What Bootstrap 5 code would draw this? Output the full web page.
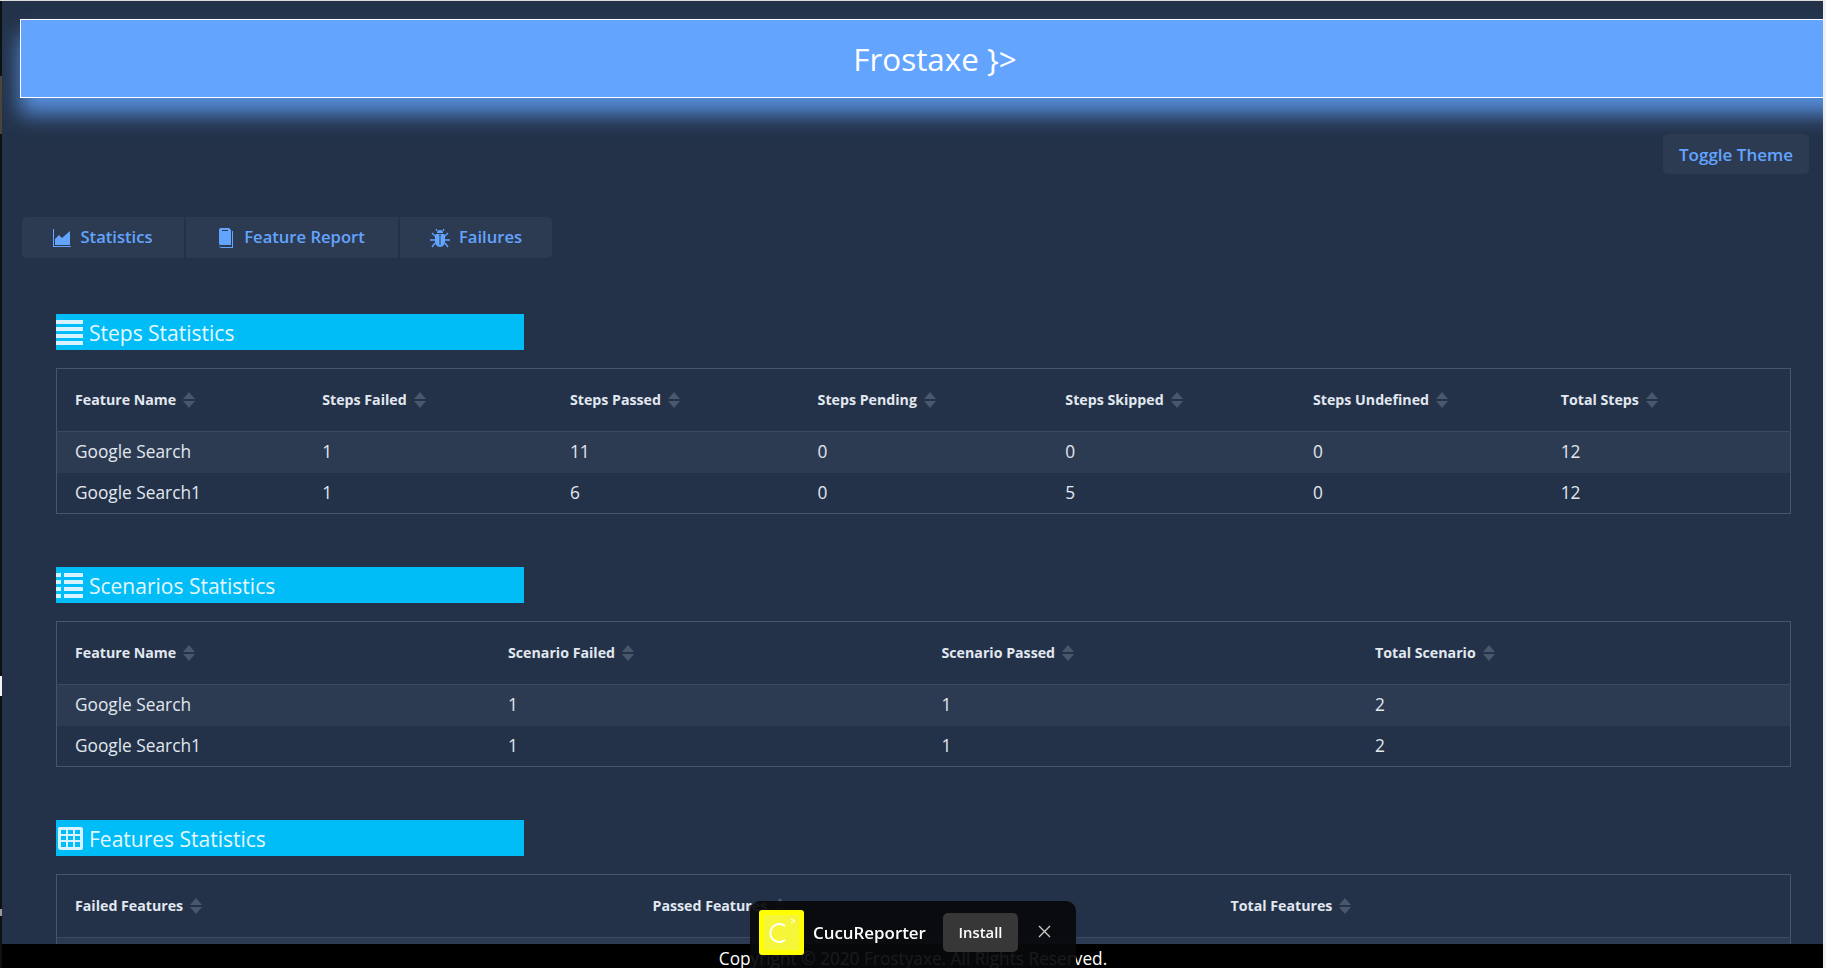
<!DOCTYPE html>
<html lang="en">
<head>
    <meta charset="UTF-8">
    <meta name="viewport" content="width=device-width, initial-scale=1.0">
    <title>Frostaxe</title>
    <link href="https://cdn.jsdelivr.net/npm/bootstrap@5.3.0/dist/css/bootstrap.min.css" rel="stylesheet">
    <script src="https://cdn.jsdelivr.net/npm/bootstrap@5.3.0/dist/js/bootstrap.bundle.min.js"></script>
    <style>
        html, body { height: 100%; overflow: hidden; }
        body {
            background: #233249;
            color: #e2e8f0;
            font-family: "Open Sans", "Noto Sans", sans-serif;
            border-top: 1px solid #ddd;
        }
        .edge-left {
            position: fixed;
            left: 0; top: 1px; bottom: 0;
            width: 2px;
            background: linear-gradient(#0c1114 0 75px, #4a4538 75px 133px, #0c1114 133px 675px, #f4f4f4 675px 695px, #0c1114 695px 908px, #9a9a9a 908px 915px, #0c1114 915px);
            z-index: 5;
        }
        .edge-right {
            position: fixed;
            right: 0; top: 0; bottom: 0;
            width: 3px;
            background: #eef0f4;
            z-index: 5;
        }
        .page-wrap { padding: 18px 0 0 20px; }
        .banner {
            height: 79px;
            margin-right: -24px;
            background: #63a4ff;
            border: 1px solid #fff;
            color: #fff;
            font-size: 31.4px;
            box-shadow: 0 16px 20px rgba(99,164,255,.8);
        }
        .theme-row { padding: 36px 17px 0 0; }
        .soft-btn {
            background: #2d3b52;
            color: #63a4ff;
            font-weight: 600;
            border-radius: 5px;
            border: 0;
        }
        .soft-btn:hover { background: #2d3b52; color: #63a4ff; }
        .theme-btn { width: 146px; height: 40px; font-size: 17px; padding: 1px 0 0; }
        .tabs-row { margin: 43px 0 0 2px; gap: 2px; }
        .tab-btn { height: 41px; font-size: 16.6px; padding: 0; border-radius: 0; gap: 9px; }
        .tab-btn svg { fill: #63a4ff; }
        .tab-a { width: 162px; border-radius: 5px 0 0 5px; }
        .tab-b { width: 212px; gap: 11px; }
        .tab-c { width: 152px; border-radius: 0 5px 5px 0; }
        .stats-wrap { padding: 56px 35px 0 36px; }
        .sec-head {
            width: 468px;
            height: 36px;
            padding-top: 3px;
            background: #00bdf7;
            color: #e4f7ff;
            font-size: 21px;
            font-weight: 400;
            gap: 5px;
            margin: 0 0 18px;
        }
        .sec-head svg { fill: #d8f3ff; flex: none; margin-top: -3px; }
        .stat-table {
            table-layout: fixed;
            width: 100%;
            margin-bottom: 53px;
            border: 1px solid #46556b;
            color: #e2e8f0;
            --bs-table-bg: transparent;
            --bs-table-color: #e2e8f0;
        }
        .stat-table th {
            height: 63px;
            padding: 0 0 0 18px;
            font-size: 14.2px;
            font-weight: 700;
            vertical-align: middle;
            border-bottom: 1px solid #3a4a60;
        }
        .stat-table td {
            height: 41px;
            padding: 0 0 0 18px;
            font-size: 17.3px;
            vertical-align: middle;
            border: 0;
        }
        .stat-table tbody tr:first-child td { background: #2d3b52; }
        .sort-mark { display: inline-block; vertical-align: -3px; margin-left: 7px; fill: #4a576a; }
        .foot-bar {
            position: fixed;
            left: 0; right: 0; bottom: 0;
            height: 24px;
            background: #000;
            color: #fff;
            font-size: 17.25px;
            line-height: 29px;
            text-align: center;
            overflow: hidden;
        }
        .install-bar {
            position: fixed;
            left: 750px;
            top: 901px;
            width: 326px;
            height: 67px;
            background: rgba(8,9,11,.93);
            border-radius: 10px 10px 0 0;
            padding: 9px 0 0 9px;
            color: #fff;
        }
        .app-logo {
            width: 45px; height: 45px;
            background: #ffff00;
            border-radius: 3px;
            flex: none;
        }
        .app-name { height: 45px; font-size: 16.9px; font-weight: 600; margin-left: 9px; width: 130px; }
        .install-btn {
            width: 75px; height: 39px;
            background: #373737;
            color: #fff;
            font-size: 14.8px;
            font-weight: 600;
            border-radius: 5px;
            padding: 0;
            border: 0;
            margin-top: 3px;
        }
        .close-x { margin: 15px 0 0 20px; stroke: #c8c8c8; }
    </style>
</head>
<body>
    <div class="edge-left"></div>
    <div class="edge-right"></div>

    <div class="page-wrap">
        <header class="banner d-flex align-items-center justify-content-center">Frostaxe }&gt;</header>

        <div class="theme-row d-flex justify-content-end">
            <button class="btn soft-btn theme-btn">Toggle Theme</button>
        </div>

        <div class="tabs-row d-flex">
            <button class="btn soft-btn tab-btn tab-a d-flex align-items-center justify-content-center">
                <svg width="18" height="18" viewBox="0 0 18 18"><path d="M0 0h1v17h17v1H0z"/><path d="M2 16v-6l4-4 3 3 8-7v14z"/></svg>
                Statistics
            </button>
            <button class="btn soft-btn tab-btn tab-b d-flex align-items-center justify-content-center">
                <svg width="14" height="20" viewBox="0 0 14 20"><path d="M2 0h8l2 2v15H2a2 2 0 0 1-2-1V2a2 2 0 0 1 2-2z"/><path fill="#2d3b52" d="M3 2h6v1H3z"/><path d="M13 3h1v17H3a3 3 0 0 1-3-2v-1a2 2 0 0 0 2 2h11z"/></svg>
                Feature Report
            </button>
            <button class="btn soft-btn tab-btn tab-c d-flex align-items-center justify-content-center">
                <svg width="20" height="20" viewBox="0 0 20 20"><path d="M7 5a3 3 0 0 1 6 0z"/><path d="M6 6h8a2 2 0 0 1 1 2v6a5 5 0 0 1-10 0V8a2 2 0 0 1 1-2z"/><path fill="none" stroke="#63a4ff" stroke-width="1.300" d="M7 3 6 1M13 3l1-2M5 8 2 5M15 8l3-3M5 12H0M15 12h5M5 15l-3 4M15 15l3 4"/><path fill="#2d3b52" d="M9.500 9h1v8h-1z"/><circle cx="10" cy="7.500" r="1" fill="#2d3b52"/></svg>
                Failures
            </button>
        </div>

        <div class="stats-wrap">
            <section>
                <h5 class="sec-head d-flex align-items-center">
                    <svg width="28" height="26" viewBox="0 0 28 26"><path d="M0 1h27v4H0zM0 8h27v4H0zM0 15h27v4H0zM0 22h27v4H0z"/></svg>
                    Steps Statistics
                </h5>
                <table class="table stat-table">
                    <thead>
                        <tr id="steps-head"></tr>
                    </thead>
                    <tbody>
                        <tr><td>Google Search</td><td>1</td><td>11</td><td>0</td><td>0</td><td>0</td><td>12</td></tr>
                        <tr><td>Google Search1</td><td>1</td><td>6</td><td>0</td><td>5</td><td>0</td><td>12</td></tr>
                    </tbody>
                </table>
            </section>
            <section>
                <h5 class="sec-head d-flex align-items-center">
                    <svg width="28" height="26" viewBox="0 0 28 26"><path d="M0 1h5v4H0zM8 1h19v4H8zM0 8h5v4H0zM8 8h19v4H8zM0 15h5v4H0zM8 15h19v4H8zM0 22h5v4H0zM8 22h19v4H8z"/></svg>
                    Scenarios Statistics
                </h5>
                <table class="table stat-table">
                    <thead>
                        <tr id="scenario-head"></tr>
                    </thead>
                    <tbody>
                        <tr><td>Google Search</td><td>1</td><td>1</td><td>2</td></tr>
                        <tr><td>Google Search1</td><td>1</td><td>1</td><td>2</td></tr>
                    </tbody>
                </table>
            </section>
            <section>
                <h5 class="sec-head d-flex align-items-center">
                    <svg width="28" height="26" viewBox="0 0 28 26"><path fill-rule="evenodd" d="M3 2h22a2 2 0 0 1 2 2v19a2 2 0 0 1-2 2H5a3 3 0 0 1-3-3V3zM5 5v4h5V5zM12 5v4h5V5zM19 5v4h5V5zM5 11v4h5v-4zM12 11v4h5v-4zM19 11v4h5v-4zM5 17v5h5v-5zM12 17v5h5v-5zM19 17v5h5v-5z"/></svg>
                    Features Statistics
                </h5>
                <table class="table stat-table">
                    <thead>
                        <tr id="feature-head"></tr>
                    </thead>
                    <tbody>
                        <tr><td>1</td><td>1</td><td>2</td></tr>
                    </tbody>
                </table>
            </section>
        </div>
    </div>

    <footer class="foot-bar">Copyright © 2020 Frostyaxe. All Rights Reserved.</footer>

    <div class="install-bar d-flex align-items-start">
        <div class="app-logo d-flex align-items-center justify-content-center">
            <svg width="35" height="35" viewBox="0 0 35 35"><rect width="35" height="35" fill="#f5f53a"/><path d="M21 11a9 9 0 1 0 0 14" fill="none" stroke="#fff" stroke-width="2"/><path d="M27 4l4 2-4 2" fill="none" stroke="#fff"/></svg>
        </div>
        <div class="app-name d-flex align-items-center">CucuReporter</div>
        <button class="btn install-btn">Install</button>
        <svg class="close-x" width="13" height="13" viewBox="0 0 13 13"><path d="M1 1l11 11M12 1 1 12" stroke-width="1.400" fill="none"/></svg>
    </div>

    <script>
        const sortMark = '<svg class="sort-mark" width="12" height="16" viewBox="0 0 12 16"><path d="M6 0l6 7H0zM0 9h12l-6 7z"/></svg>';
        function fillHead(id, names) {
            document.getElementById(id).innerHTML = names.map(n => `<th>${n}${sortMark}</th>`).join('');
        }
        fillHead('steps-head', ['Feature Name', 'Steps Failed', 'Steps Passed', 'Steps Pending', 'Steps Skipped', 'Steps Undefined', 'Total Steps']);
        fillHead('scenario-head', ['Feature Name', 'Scenario Failed', 'Scenario Passed', 'Total Scenario']);
        fillHead('feature-head', ['Failed Features', 'Passed Features', 'Total Features']);
    </script>
</body>
</html>
